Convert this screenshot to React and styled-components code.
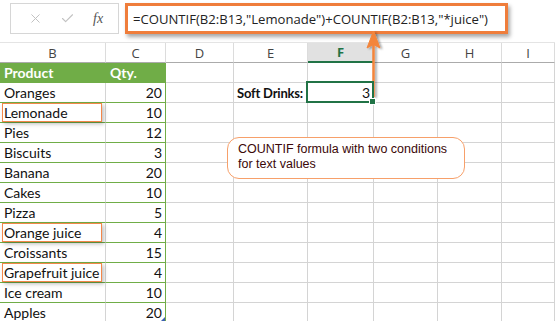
import React from 'react';
import styled, { createGlobalStyle } from 'styled-components';
import { X, Check } from 'lucide-react';

const GlobalStyle = createGlobalStyle`
  body {
    margin: 0;
    background: #fff;
    overflow: hidden;
  }
`;

const Page = styled.div`
  position: relative;
  width: 555px;
  height: 321px;
  overflow: hidden;
  font-family: Lato, 'Liberation Sans', sans-serif;
`;

const FormulaBar = styled.div`
  display: flex;
  align-items: flex-start;
  gap: 6px;
  height: 42px;
  box-sizing: border-box;
  padding: 3px 0 0 10px;
`;

const NameBox = styled.div`
  display: flex;
  align-items: center;
  justify-content: space-around;
  width: 109px;
  height: 31px;
  box-sizing: border-box;
  border: 1px solid #d6d6d6;
  color: #c2c2c2;
  padding: 0 6px 0 8px;
`;

const Fx = styled.span`
  font-family: 'Liberation Serif', serif;
  font-style: italic;
  font-size: 14px;
  color: #555;
`;

const FormulaInput = styled.div`
  display: flex;
  align-items: center;
  width: 383px;
  height: 31px;
  box-sizing: border-box;
  border: 3px solid #ef7d3b;
  box-shadow: 2px 3px 4px rgba(0, 0, 0, 0.35);
  padding-left: 5px;
  font-family: 'Open Sans', sans-serif;
  font-size: 13.1px;
  color: #222;
  white-space: nowrap;
`;

const Sheet = styled.div`
  display: grid;
  grid-template-columns: 106px 60px 68px 74px 66px 64px 64px 53px;
  grid-auto-rows: 20px;
  border-top: 1px solid #e4e4e4;
`;

const HeadCell = styled.div`
  display: flex;
  align-items: center;
  justify-content: center;
  box-sizing: border-box;
  border-right: 1px solid #dcdcdc;
  border-bottom: ${({ $active }) => ($active ? '2px solid #217346' : '1px solid #ababab')};
  background: ${({ $active }) => ($active ? '#e1e1e1' : '#fff')};
  color: ${({ $active }) => ($active ? '#217346' : '#444')};
  font-family: 'Open Sans', sans-serif;
  font-weight: ${({ $active }) => ($active ? 700 : 400)};
  font-size: 13px;
`;

const Cell = styled.div`
  position: relative;
  display: flex;
  align-items: center;
  justify-content: ${({ $num }) => ($num ? 'flex-end' : 'flex-start')};
  box-sizing: border-box;
  padding: 0 3px 0 ${({ $bold }) => ($bold ? '3px' : '4px')};
  border-right: 1px solid ${({ $edge, $head }) => ($edge || $head ? '#70ad47' : '#d4d4d4')};
  border-bottom: 1px solid ${({ $tbl }) => ($tbl ? '#70ad47' : '#d4d4d4')};
  background: ${({ $head }) => ($head ? '#70ad47' : 'transparent')};
  color: ${({ $head }) => ($head ? '#fff' : '#111')};
  font-size: ${({ $bold }) => ($bold ? '13px' : '14px')};
  font-weight: ${({ $bold, $head }) => ($bold || $head ? 700 : 400)};
  letter-spacing: ${({ $bold }) => ($bold ? '-0.2px' : '0')};
  white-space: nowrap;
  overflow: visible;
`;

const Selected = styled.div`
  position: absolute;
  inset: -2px -1px -1px -2px;
  border: 2px solid #217346;
  pointer-events: none;
  z-index: 2;

  &::after {
    content: '';
    position: absolute;
    right: -4px;
    bottom: -4px;
    width: 5px;
    height: 5px;
    background: #217346;
    border: 1px solid #fff;
  }
`;

const Corner = styled.span`
  position: absolute;
  right: 0;
  bottom: 0;
  width: 0;
  height: 0;
  border-left: 5px solid transparent;
  border-bottom: 5px solid #3d5fb0;
`;

const Marked = styled.span`
  position: absolute;
  left: 2px;
  top: 0;
  bottom: 0;
  width: 100px;
  box-sizing: border-box;
  border: 1px solid #f3874a;
  box-shadow: 2px 2px 4px rgba(0, 0, 0, 0.25);
  pointer-events: none;
`;

const Callout = styled.div`
  position: absolute;
  left: 227px;
  top: 137px;
  width: 238px;
  height: 42px;
  box-sizing: border-box;
  border: 1px solid #f7a06a;
  border-radius: 12px;
  background: #fff;
  padding: 4px 0 0 10px;
  font-family: 'Liberation Sans', Arial, sans-serif;
  font-size: 12.5px;
  line-height: 15px;
  color: #3b0808;
`;

const Arrow = styled.svg`
  position: absolute;
  left: 360px;
  top: 28px;
  overflow: visible;
`;

const columns = ['B', 'C', 'D', 'E', 'F', 'G', 'H', 'I'];

const products = [
  ['Oranges', 20],
  ['Lemonade', 10, true],
  ['Pies', 12],
  ['Biscuits', 3],
  ['Banana', 20],
  ['Cakes', 10],
  ['Pizza', 5],
  ['Orange juice', 4, true],
  ['Croissants', 15],
  ['Grapefruit juice', 4, true],
  ['Ice cream', 10],
  ['Apples', 20],
];

function Row({ index, item }) {
  const isHead = index === 0;
  return columns.map((col) => {
    const key = `${col}${index}`;
    if (col === 'B') {
      return (
        <Cell key={key} $head={isHead} $tbl>
          {isHead ? 'Product' : item[0]}
          {item && item[2] && <Marked />}
        </Cell>
      );
    }
    if (col === 'C') {
      return (
        <Cell key={key} $head={isHead} $tbl $edge $num={!isHead}>
          {isHead ? 'Qty.' : item[1]}
          {index === 12 && <Corner />}
        </Cell>
      );
    }
    if (col === 'E' && index === 1) {
      return (
        <Cell key={key} $bold>
          Soft Drinks:
        </Cell>
      );
    }
    if (col === 'F' && index === 1) {
      return (
        <Cell key={key} $num>
          3
          <Selected />
        </Cell>
      );
    }
    return <Cell key={key} />;
  });
}

export default function App() {
  return (
    <Page>
      <GlobalStyle />
      <FormulaBar>
        <NameBox>
          <X size={15} strokeWidth={1.6} />
          <Check size={15} strokeWidth={1.8} />
          <Fx>fx</Fx>
        </NameBox>
        <FormulaInput>=COUNTIF(B2:B13,"Lemonade")+COUNTIF(B2:B13,"*juice")</FormulaInput>
      </FormulaBar>

      <Sheet>
        {columns.map((col) => (
          <HeadCell key={col} $active={col === 'F'}>
            {col}
          </HeadCell>
        ))}
        <Row index={0} />
        {products.map((item, i) => (
          <Row key={item[0]} index={i + 1} item={item} />
        ))}
      </Sheet>

      <Callout>
        COUNTIF formula with two conditions
        <br />
        for text values
      </Callout>

      <Arrow width="30" height="75" viewBox="0 0 30 75">
        <defs>
          <filter id="arrowShadow" x="-50%" y="-20%" width="200%" height="140%">
            <feDropShadow dx="2" dy="1" stdDeviation="1.2" floodColor="#000" floodOpacity="0.35" />
          </filter>
        </defs>
        <g filter="url(#arrowShadow)" fill="#f3853b" stroke="#f3853b">
          <line x1="13.5" y1="14" x2="13.5" y2="69" strokeWidth="2.5" />
          <path d="M13.5 3 L20 20 L13.5 16.5 L7 20 Z" strokeWidth="1" strokeLinejoin="round" />
        </g>
      </Arrow>
    </Page>
  );
}
